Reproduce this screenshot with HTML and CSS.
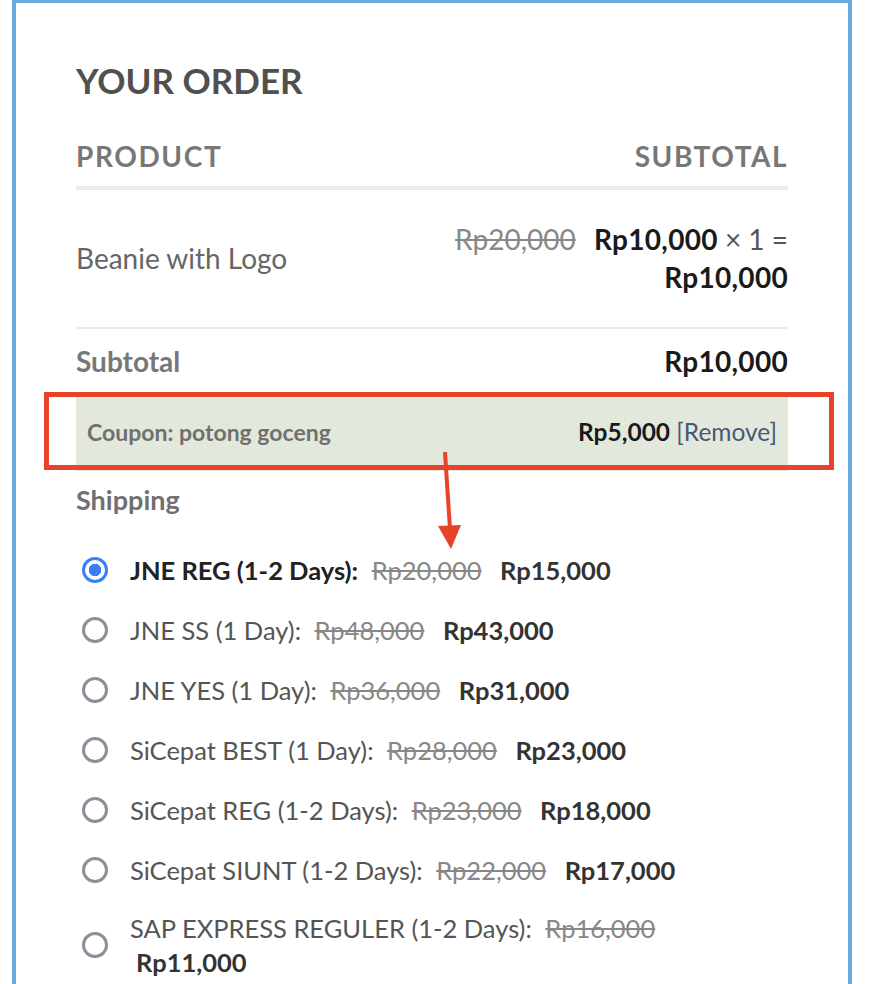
FILE: index.html
```html
<!DOCTYPE html>
<html>
<head>
<meta charset="utf-8">
<link rel="stylesheet" href="styles.css">
</head>
<body>
<div class="frame">
  <h3 class="title">YOUR ORDER</h3>
  <table class="order">
    <thead>
      <tr><th class="left">PRODUCT</th><th class="right">SUBTOTAL</th></tr>
    </thead>
    <tbody>
      <tr class="item">
        <td class="name">Beanie with Logo</td>
        <td class="price"><del>Rp20,000</del> <strong>Rp10,000</strong> × 1 = <strong>Rp10,000</strong></td>
      </tr>
    </tbody>
    <tfoot>
      <tr class="subtotal"><th class="left">Subtotal</th><td class="right"><strong>Rp10,000</strong></td></tr>
      <tr class="coupon"><th class="left">Coupon: potong goceng</th><td class="right"><strong>Rp5,000</strong> <a class="remove" href="#">[Remove]</a></td></tr>
    </tfoot>
  </table>
  <div class="shipping-title">Shipping</div>
  <ul class="methods">
    <li class="method selected"><span class="radio"></span><span class="label"><b>JNE REG (1-2 Days):</b> <del>Rp20,000</del> <strong>Rp15,000</strong></span></li>
    <li class="method"><span class="radio"></span><span class="label">JNE SS (1 Day): <del>Rp48,000</del> <strong>Rp43,000</strong></span></li>
    <li class="method"><span class="radio"></span><span class="label">JNE YES (1 Day): <del>Rp36,000</del> <strong>Rp31,000</strong></span></li>
    <li class="method"><span class="radio"></span><span class="label">SiCepat BEST (1 Day): <del>Rp28,000</del> <strong>Rp23,000</strong></span></li>
    <li class="method"><span class="radio"></span><span class="label">SiCepat REG (1-2 Days): <del>Rp23,000</del> <strong>Rp18,000</strong></span></li>
    <li class="method"><span class="radio"></span><span class="label">SiCepat SIUNT (1-2 Days): <del>Rp22,000</del> <strong>Rp17,000</strong></span></li>
    <li class="method"><span class="radio"></span><span class="label">SAP EXPRESS REGULER (1-2 Days): <del>Rp16,000</del> <strong>Rp11,000</strong></span></li>
  </ul>
  <div class="highlight"></div>
  <svg class="arrow" width="40" height="110" viewBox="0 0 40 110">
    <line x1="10" y1="3" x2="15" y2="80" stroke="#e8432a" stroke-width="4"/>
    <polygon points="3,77 26,76 16,100" fill="#e8432a"/>
  </svg>
</div>
</body>
</html>
```
FILE: styles.css
```css
html, body {
  margin: 0;
  padding: 0;
  background: #fff;
}
body {
  font-family: Lato, "Open Sans", sans-serif;
  overflow: hidden;
  height: 984px;
}
.frame {
  position: relative;
  box-sizing: border-box;
  margin-left: 12px;
  width: 840px;
  min-height: 984px;
  border: 4px solid #6aaadc;
  border-top-width: 3px;
  border-bottom: none;
  padding: 0 60px;
}
.title {
  margin: 55px 0 0;
  font-size: 35px;
  line-height: 44px;
  font-weight: 700;
  color: #505050;
  letter-spacing: 0;
}
.order {
  width: 100%;
  border-collapse: collapse;
  margin-top: 36px;
}
.order th, .order td {
  padding: 0;
  vertical-align: middle;
}
.left { text-align: left; }
.right { text-align: right; }
.order thead th {
  font-size: 28px;
  font-weight: 700;
  color: #777;
  letter-spacing: 1.6px;
  line-height: 36px;
  padding-bottom: 12px;
  border-bottom: 4px solid #ececec;
}
.order thead th.right {
  letter-spacing: 1.5px;
}
.item td {
  padding: 30px 0 31px;
  border-bottom: 2px solid #ececec;
  font-size: 28px;
  line-height: 38px;
}
.name {
  color: #666;
  width: 50%;
}
.price {
  text-align: right;
  color: #555;
}
.price del {
  margin-right: 11px;
}
.price strong, .subtotal strong, .coupon strong {
  color: #1a1a1a;
  font-weight: 700;
  letter-spacing: 0.3px;
}
del {
  color: #888;
}
.subtotal th, .subtotal td {
  font-size: 28px;
  line-height: 36px;
  padding: 14px 0 16px;
}
.subtotal th {
  color: #777;
  font-weight: 700;
}
.coupon th, .coupon td {
  background: #e3e8dd;
  line-height: 30px;
  padding: 22px 0 24px;
}
.coupon th {
  font-size: 23px;
  padding-left: 11px;
  color: #707070;
  font-weight: 700;
}
.coupon td {
  font-size: 24.5px;
  padding-right: 11px;
}
.coupon td strong {
  letter-spacing: 0;
}
.remove {
  color: #4a5874;
  text-decoration: none;
}
.shipping-title {
  margin-top: 12px;
  font-size: 27px;
  line-height: 34px;
  font-weight: 700;
  color: #707070;
}
.methods {
  list-style: none;
  margin: 23px 0 0;
  padding: 0 12px 0 0;
}
.method {
  display: flex;
  align-items: center;
  padding: 13px 0;
  font-size: 25.5px;
  line-height: 34px;
  color: #555;
}
.method:last-child {
  padding: 11px 0 13px;
}
.radio {
  flex: none;
  box-sizing: border-box;
  width: 26px;
  height: 26px;
  border-radius: 50%;
  border: 3px solid #8e8e98;
  margin: 0 22px 0 6px;
}
.selected .radio {
  border-color: #3a7ff6;
  background: radial-gradient(circle, #3a7ff6 0 6px, #fff 6.5px);
}
.selected .label b {
  color: #222;
  font-weight: 700;
}
.label del {
  margin: 0 6px 0 7px;
}
.label strong {
  margin-left: 6px;
  color: #333;
  font-weight: 700;
}
.highlight {
  position: absolute;
  left: 28px;
  top: 389px;
  width: 790px;
  height: 78px;
  box-sizing: border-box;
  border: 5px solid #e8432a;
  pointer-events: none;
}
.arrow {
  position: absolute;
  left: 419px;
  top: 446px;
}
```
